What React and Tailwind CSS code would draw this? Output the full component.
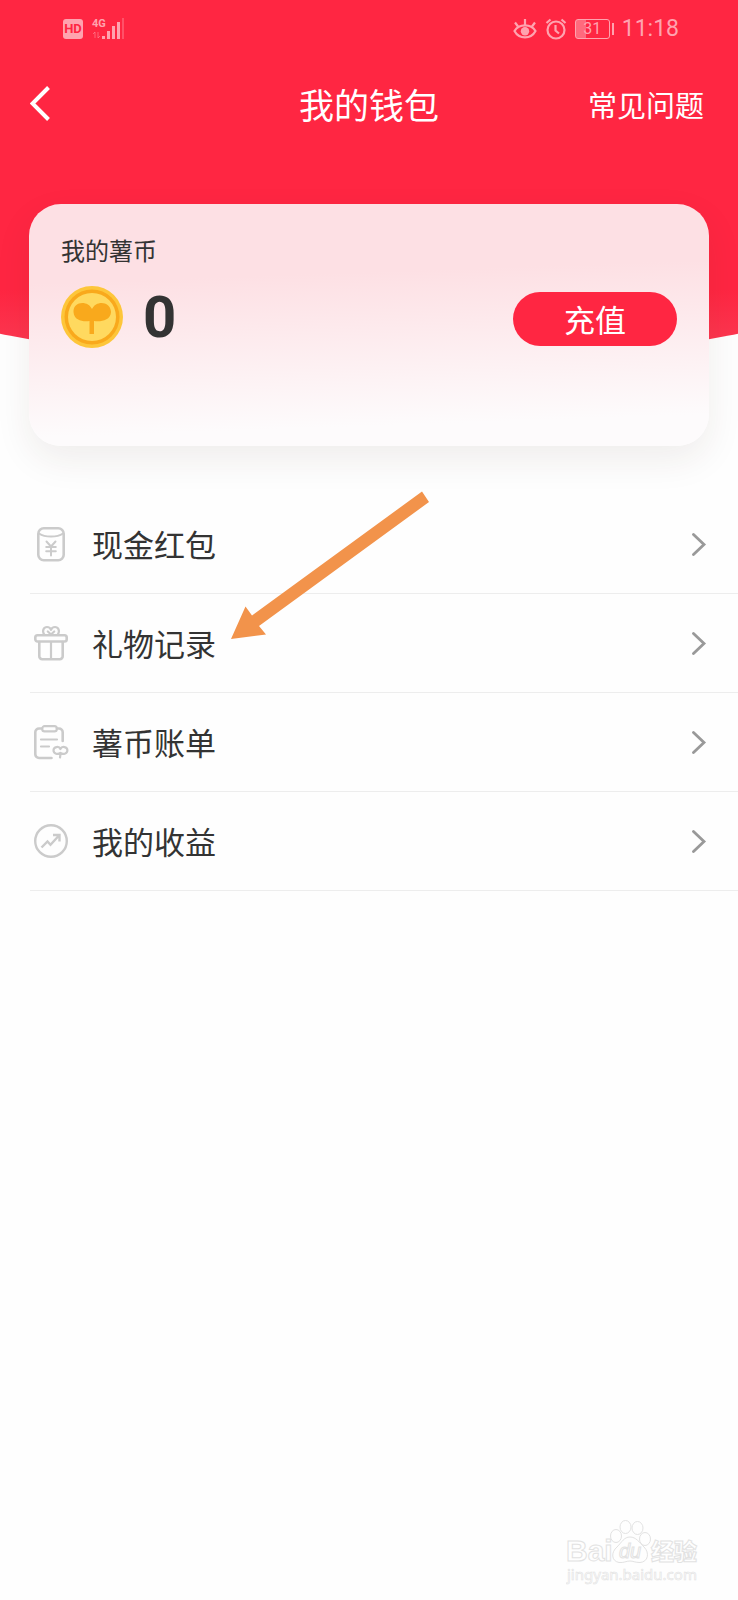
import React from 'react';

const CashIcon = () => (
    <svg width="36" height="36" viewBox="0 0 36 36" fill="none" stroke="#cbcbcb" strokeWidth="2.6" strokeLinecap="round" strokeLinejoin="round" aria-hidden="true">
        <rect x="5.3" y="2.3" width="25.4" height="32" rx="5.5" />
        <path d="M6 7.5 C12 11.5 24 11.5 30 7.5" strokeWidth="2" />
        <path d="M13.5 15.5 L18 20.5 L22.5 15.5 M18 20.5 V29.5 M13.2 21 H22.8 M13.2 25.3 H22.8" strokeWidth="2" />
    </svg>
);

const GiftIcon = () => (
    <svg width="36" height="36" viewBox="0 0 36 36" fill="none" stroke="#cbcbcb" strokeWidth="2.6" strokeLinecap="round" strokeLinejoin="round" aria-hidden="true">
        <rect x="2.3" y="10.3" width="31.4" height="6.2" rx="2.2" />
        <path d="M6.3 17 V31 A3 3 0 0 0 9.3 34.2 H26.7 A3 3 0 0 0 29.7 31 V17" />
        <path d="M18 17 V34" strokeWidth="2.2" />
        <path d="M11.2 9.5 C8.6 5.5 11 2 14 2 C16.2 2 17.5 3.2 18 4.8 C18.5 3.2 19.8 2 22 2 C25 2 27.4 5.5 24.8 9.5 M14.8 6.5 L18 9.5 L21.2 6.5" strokeWidth="2.2" />
    </svg>
);

const BillIcon = () => (
    <svg width="36" height="36" viewBox="0 0 36 36" fill="none" stroke="#cbcbcb" strokeWidth="2.6" strokeLinecap="round" strokeLinejoin="round" aria-hidden="true">
        <path d="M9 4.5 H6 A3.7 3.7 0 0 0 2.3 8.2 V30.3 A3.7 3.7 0 0 0 6 34 H18.5 M24 4.5 H26 A3.7 3.7 0 0 1 29.7 8.2 V17" />
        <rect x="9.2" y="2.2" width="14.6" height="5.2" rx="2.4" strokeWidth="2.2" />
        <path d="M8 15.5 H24 M8 22.5 H16" strokeWidth="2.2" />
        <path d="M27.4 29 C25 30.8 20.5 30 20.5 26.3 C20.5 22.8 26 21.6 27.4 25 C29 21.6 34.4 22.8 34.4 26.3 C34.4 30 29.8 30.8 27.4 29 Z M27.6 29 L27 33.5" strokeWidth="2.2" />
    </svg>
);

const IncomeIcon = () => (
    <svg width="36" height="36" viewBox="0 0 36 36" fill="none" stroke="#cbcbcb" strokeWidth="2.4" strokeLinejoin="round" aria-hidden="true">
        <circle cx="18" cy="18" r="15.8" />
        <path d="M8.5 24.5 L14.5 18.5 L17.5 21.8 L26 12.5 M20 12 H26.5 V18.5" strokeLinejoin="miter" />
    </svg>
);

const menuItems = [
    { name: "现金红包", icon: CashIcon },
    { name: "礼物记录", icon: GiftIcon },
    { name: "薯币账单", icon: BillIcon },
    { name: "我的收益", icon: IncomeIcon },
];

function StatusBar() {
    return (
        <div className="h-[58px] flex items-center justify-between pl-[63px] pr-[59px] text-[#ffa3af]">
            <div className="flex items-center gap-2">
                <span className="w-5 h-5 rounded-[3px] bg-[#ffa3af] text-[#ff2642] text-[13px] leading-5 font-bold text-center font-[Roboto,sans-serif]">HD</span>
                <svg width="34" height="30" viewBox="0 0 34 30" fill="currentColor" aria-hidden="true">
                    <text x="1" y="13" fontSize="11" fontWeight="700" fontFamily="Roboto, sans-serif">4G</text>
                    <path d="M4 18 V24 M2 20 L4 18 M7 18 V24 L9 22" fill="none" stroke="currentColor" strokeWidth="1" opacity="0.5" />
                    <rect x="11" y="22" width="3" height="3" />
                    <rect x="16" y="17" width="3" height="8" />
                    <rect x="21" y="12" width="3" height="13" />
                    <rect x="26" y="8" width="3" height="17" />
                    <rect x="31" y="4" width="2" height="21" opacity="0.35" />
                </svg>
            </div>
            <div className="flex items-center gap-2">
                <svg width="24" height="22" viewBox="0 0 24 22" fill="none" stroke="currentColor" strokeWidth="2.2" aria-hidden="true">
                    <path d="M1.5 13 C6 5.5 18 5.5 22.5 13 C18 21.5 6 21.5 1.5 13 Z" />
                    <path d="M12 1 V7 M2 4.5 L5 8.5 M22 4.5 L19 8.5" />
                    <circle cx="12" cy="13.2" r="4.2" fill="currentColor" stroke="none" />
                </svg>
                <svg width="22" height="22" viewBox="0 0 22 22" fill="none" stroke="currentColor" strokeWidth="2.2" aria-hidden="true">
                    <circle cx="11" cy="12" r="8.5" />
                    <path d="M10.5 7 V12.5 L14 15.5 M1.5 5 L5.5 1.5 M20.5 5 L16.5 1.5" />
                </svg>
                <div className="flex items-center gap-0.5">
                    <span className="w-[35px] h-5 border border-current rounded-[3px] text-[16px] leading-[18px] text-center font-[Roboto,sans-serif] bg-[linear-gradient(90deg,#ff6a7d_30%,transparent_30%)]">31</span>
                    <span className="w-0.5 h-3 bg-[#ffa3af]" />
                </div>
                <span className="text-[23px] leading-7 font-[Roboto,sans-serif]">11:18</span>
            </div>
        </div>
    );
}

function Watermark() {
    return (
        <svg className="absolute right-8 bottom-3 pointer-events-none" width="140" height="70" viewBox="0 0 140 70" fill="#fefefe" stroke="#e2e2e2" strokeWidth="1" aria-hidden="true">
            <text x="0" y="43" fontSize="30" fontWeight="700" fontFamily="'Liberation Sans', sans-serif">Bai</text>
            <ellipse cx="50" cy="18" rx="5.5" ry="6.5" />
            <ellipse cx="59.5" cy="9" rx="5.5" ry="6.5" />
            <ellipse cx="71.5" cy="10" rx="5.5" ry="6.5" />
            <ellipse cx="79" cy="21" rx="5.5" ry="6.5" />
            <path d="M64 19 C70 19 73 24 78 29 C84 35 82 44 74 44.5 C69 44.5 67 43 64 43 C60 43 58 45 53 44.5 C45 43 45 34 51 29 C56 24 58 19 64 19 Z" />
            <text x="53" y="40" fontSize="20" fontStyle="italic" fontFamily="'Liberation Sans', sans-serif">du</text>
            <text x="85" y="42" fontSize="23" fontWeight="900" fontFamily="'Noto Sans CJK SC', sans-serif">经验</text>
            <text x="1" y="62" fontSize="15" fontFamily="'Noto Sans', sans-serif" strokeWidth="0.6">jingyan.baidu.com</text>
        </svg>
    );
}

function App() {
    return (
        <div className="relative min-h-screen overflow-hidden bg-[#fefefe] text-[#333] font-[Noto_Sans_CJK_SC,sans-serif]">
            {/* curved red background */}
            <div className="absolute inset-x-0 top-0 h-[371px] bg-[linear-gradient(180deg,#ff2642_78%,#fb4058_100%)] [clip-path:ellipse(250%_1845px_at_50%_-1474px)]" />

            <div className="relative">
                <StatusBar />

                <header className="h-[92px] grid grid-cols-3 items-center px-[30px] text-white">
                    <button type="button" aria-label="返回" className="justify-self-start">
                        <svg width="24" height="36" viewBox="0 0 24 36" fill="none" stroke="currentColor" strokeWidth="4" aria-hidden="true">
                            <path d="M18.5 1.5 L2.5 17.5 L18.5 33.5" />
                        </svg>
                    </button>
                    <h1 className="text-[35px] leading-[48px] text-center whitespace-nowrap">我的钱包</h1>
                    <a href="#faq" className="justify-self-end pr-1 text-[29px] leading-[48px]">常见问题</a>
                </header>

                <section className="mx-[29px] mt-[54px] px-8 pt-7 pb-[98px] rounded-[32px] bg-[linear-gradient(178deg,#fde0e4_30%,#fdfbfc_88%)] shadow-[0_14px_36px_rgba(60,40,30,0.08)]">
                    <h2 className="text-[24px] leading-9">我的薯币</h2>
                    <div className="mt-[18px] flex items-center">
                        <svg width="62" height="62" viewBox="0 0 62 62" aria-hidden="true">
                            <circle cx="31" cy="31" r="31" fill="#fdc63a" />
                            <circle cx="31" cy="31" r="27.5" fill="#f9a91c" />
                            <circle cx="31" cy="31" r="24" fill="#ffd95f" />
                            <path d="M31 23 C27 14 12 15 12.5 26 C13 35 23 36 28.5 35 L28.5 48 H33 L33 35 C39 36 49.5 35 50 26 C49.5 15 35 14 31 23 Z" fill="#f9a91c" />
                        </svg>
                        <span className="ml-5 text-[58px] leading-[62px] font-bold font-[Roboto,sans-serif]">0</span>
                        <button type="button" className="ml-auto mt-1 w-[164px] h-[54px] rounded-full bg-[#ff2642] text-white text-[31px] leading-[54px]">充值</button>
                    </div>
                </section>

                <nav className="relative mt-[49px] pl-[30px]">
                    {menuItems.map((item, index) => (
                        <button
                            key={index}
                            type="button"
                            className="w-full h-[99px] flex items-center pl-[3px] pr-[31px] border-b border-[#ededed] text-[31px] leading-[48px]"
                        >
                            <item.icon />
                            <span className="ml-[23px]">{item.name}</span>
                            <svg className="ml-auto" width="16" height="24" viewBox="0 0 16 24" fill="none" stroke="#999" strokeWidth="2.8" strokeLinecap="round" aria-hidden="true">
                                <path d="M2.5 2.5 L13 12.5 L2.5 22.5" />
                            </svg>
                        </button>
                    ))}

                    {/* arrow pointing at the gift record row */}
                    <svg className="absolute left-[230px] top-[-5px] pointer-events-none" width="200" height="150" viewBox="0 0 200 150" aria-hidden="true">
                        <path d="M1 149 L15.5 116.5 L22 125.5 L192 1.5 L199 12 L29 136 L36 144.5 Z" fill="#f2934b" />
                    </svg>
                </nav>
            </div>

            <Watermark />
        </div>
    );
}

export default App;
